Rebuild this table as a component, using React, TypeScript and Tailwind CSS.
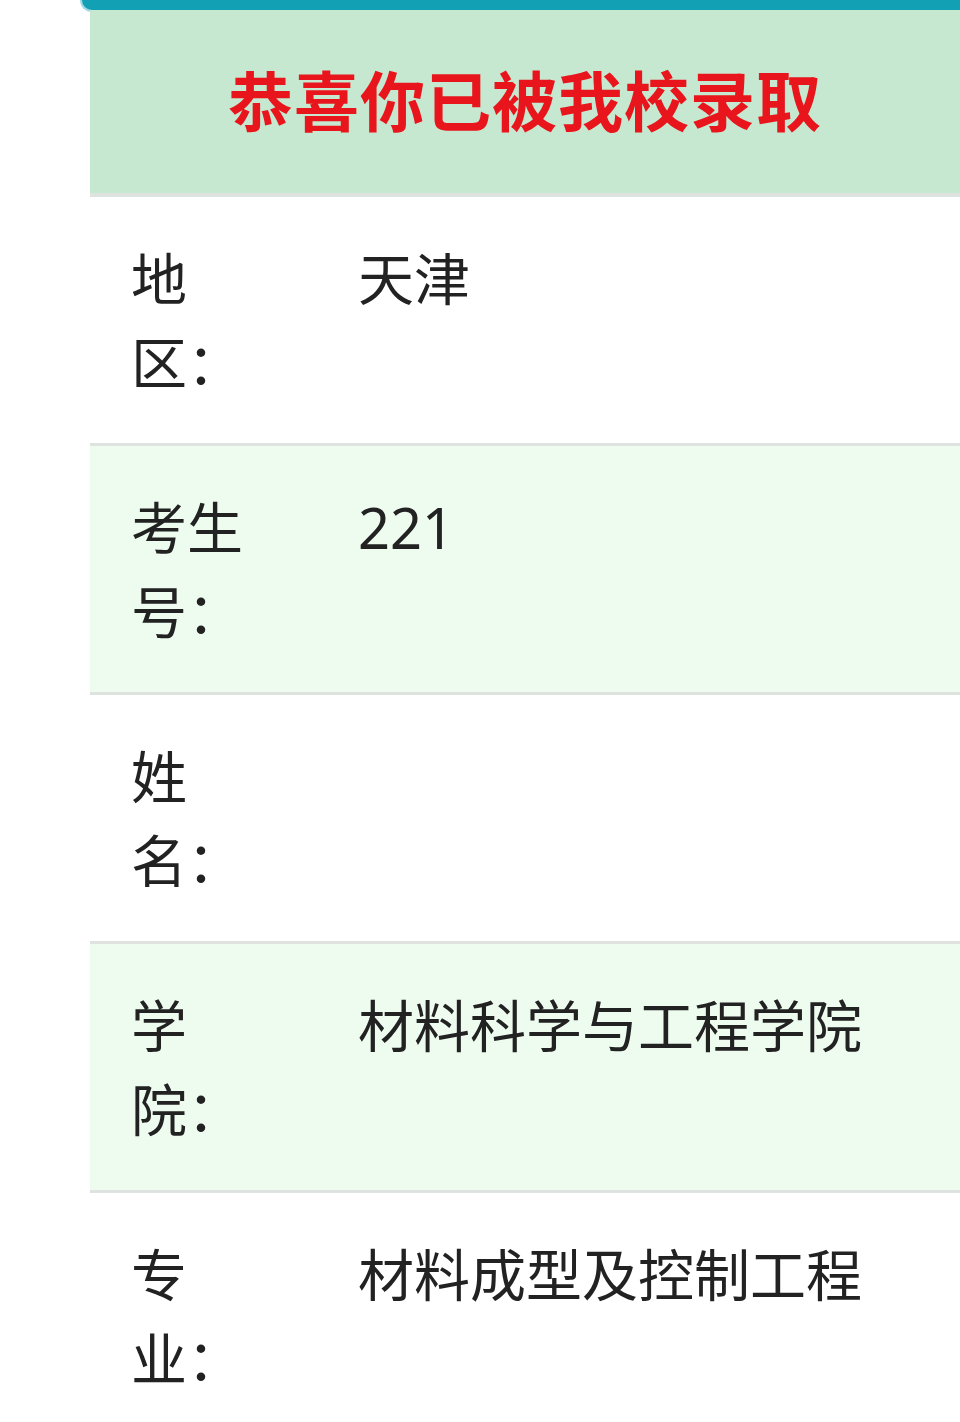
const ROWS = [
  { label: "地区：", value: "天津" },
  { label: "考生号：", value: "221" },
  { label: "姓名：", value: "" },
  { label: "学院：", value: "材料科学与工程学院" },
  { label: "专业：", value: "材料成型及控制工程" },
];

export default function App() {
  return (
    <div
      className="min-h-[1422px] overflow-hidden bg-white text-[#222]"
      style={{ fontFamily: '"Noto Sans", "Noto Sans CJK SC", sans-serif' }}
    >
      <div className="ml-[80px] h-[12px] rounded-bl-[16px] border-b-2 border-l-2 border-[#9fd8e6] bg-[#12a0b5]" />
      <div className="ml-[90px] -mt-[2px]">
        <div className="flex h-[183px] items-center justify-center bg-[#c6e8d1]">
          <h1 className="text-[65px] font-bold leading-none tracking-[1px] text-[#e8161c]">
            恭喜你已被我校录取
          </h1>
        </div>
        <div className="h-[4px] bg-[#dfe3e0]" />
        {ROWS.map((row, i) => (
          <div
            key={row.label}
            className={`flex px-[41px] py-[39px] text-[56px] leading-[84px] ${
              i > 0 ? "border-t-[3px] border-[#dfe3e0]" : ""
            } ${i % 2 === 1 ? "bg-[#eefcf0]" : "bg-white"}`}
          >
            <div className="w-[130px] shrink-0">{row.label}</div>
            <div className="ml-[97px] min-h-[168px] whitespace-nowrap">{row.value}</div>
          </div>
        ))}
      </div>
    </div>
  );
}
